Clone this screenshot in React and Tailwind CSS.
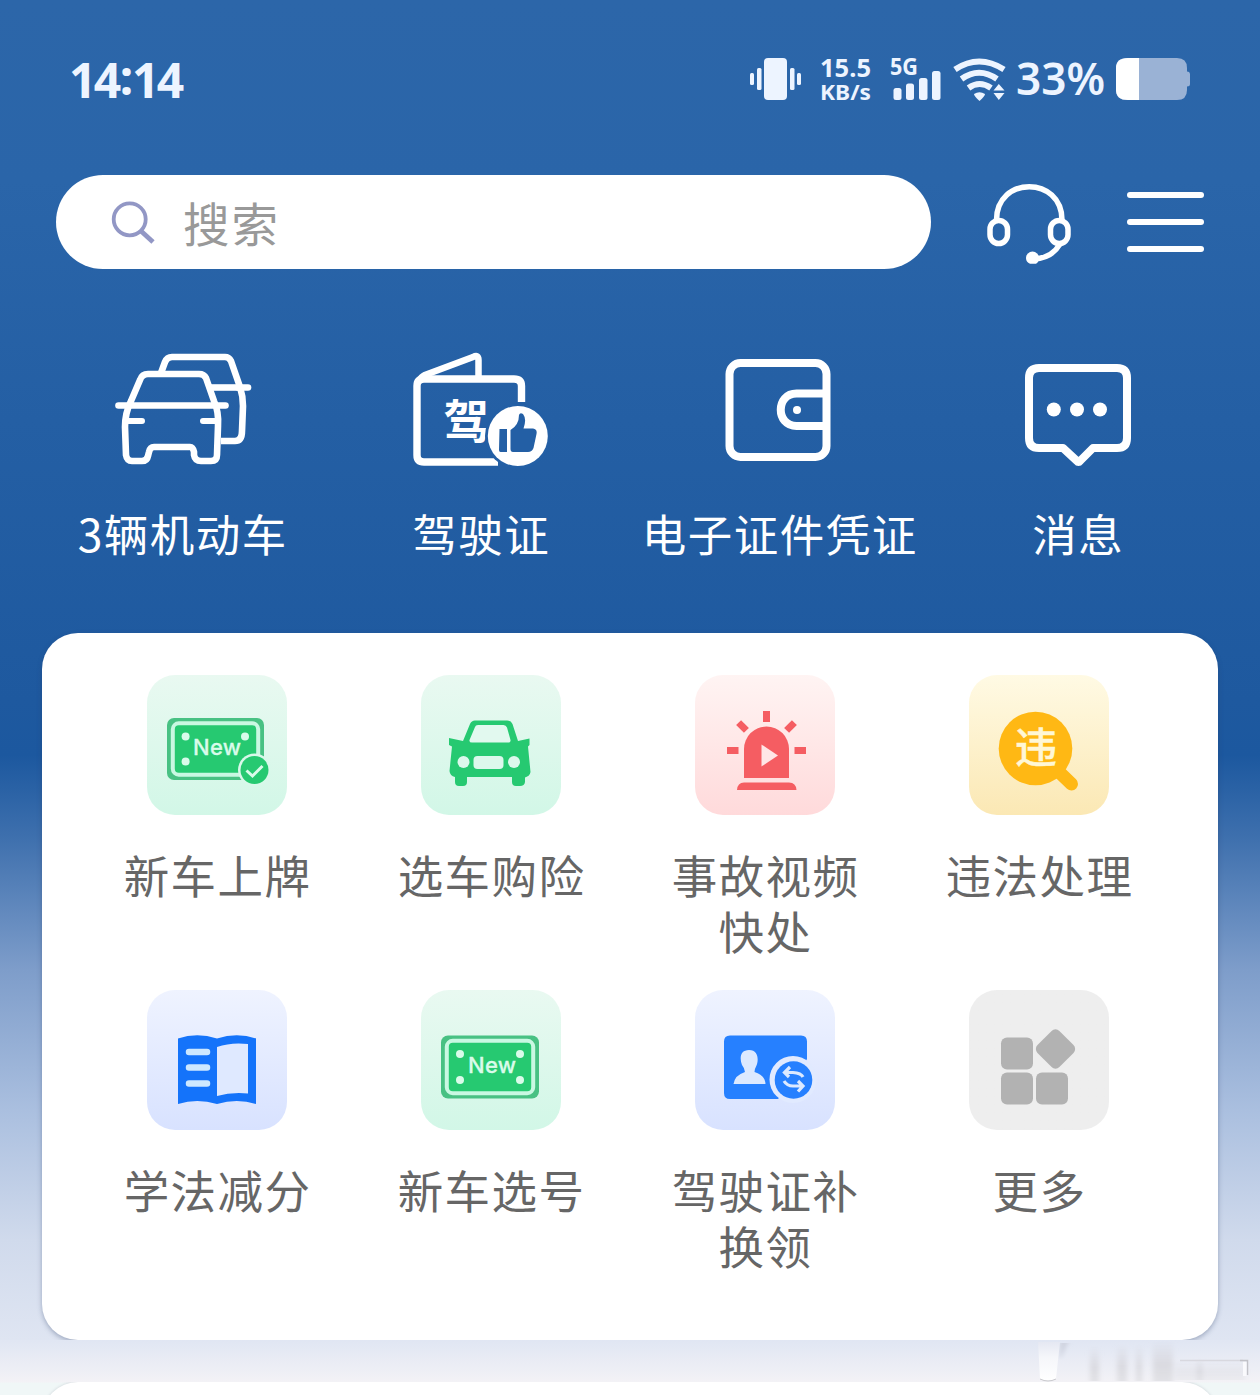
import React from "react";

const CJK = "font-['Noto_Sans_CJK_SC',sans-serif]";

/* Status bar */
function StatusIcons() {
  return (
    <svg className="block h-[70px] w-[450px] overflow-visible" viewBox="745 45 450 70" fill="#edf4ff">
      <rect x="764" y="58" width="23" height="42" rx="4" />
      <rect x="757" y="68" width="4.500" height="22" rx="1.500" />
      <rect x="750" y="73" width="4" height="12" rx="1.500" />
      <rect x="790" y="68" width="4.500" height="22" rx="1.500" />
      <rect x="797" y="73" width="4" height="12" rx="1.500" />
      <g fontFamily="'Noto Sans', sans-serif" fontWeight="700">
        <text x="820" y="77" fontSize="25" textLength="51" lengthAdjust="spacingAndGlyphs">15.5</text>
        <text x="820" y="100" fontSize="22" textLength="51" lengthAdjust="spacingAndGlyphs">KB/s</text>
        <text x="890" y="75" fontSize="23" textLength="28" lengthAdjust="spacingAndGlyphs">5G</text>
      </g>
      <rect x="893.500" y="88" width="8" height="12" rx="2.500" />
      <rect x="906" y="83.500" width="8" height="16.500" rx="2.500" />
      <rect x="919" y="78" width="8.500" height="22" rx="2.500" />
      <rect x="932" y="71" width="8.500" height="29" rx="2.500" />
      <g fill="none" stroke="#edf4ff" strokeWidth="6">
        <path d="M955 69.500 Q979 53.500 1004 69.500" />
        <path d="M961.500 79 Q979 66.500 997 79" />
        <path d="M968.500 88 Q979.500 80 991 88" />
      </g>
      <path d="M974 94 Q979.500 90.500 985 94 Q985 96 979.500 101 Q974 96 974 94Z" />
      <path d="M993.500 90.500 L998.800 84 L1004.500 90.500Z M993.500 93 L1004.500 93 L998.800 100Z" />
      <text x="1016" y="95" fontSize="45" fontWeight="600" fontFamily="'Noto Sans', sans-serif" textLength="89" lengthAdjust="spacingAndGlyphs">33%</text>
      <path d="M1127 58 H1177 Q1187 58 1187 68 V71.500 Q1190 71.500 1190 74.500 V84 Q1190 86.500 1187 86.500 V90 Q1187 100 1177 100 H1127 Q1116 100 1116 90 V68 Q1116 58 1127 58Z" fill="#9ab2d5" />
      <path d="M1139 58 H1128 Q1116 58 1116 68 V90 Q1116 100 1128 100 H1139Z" fill="#fff" />
    </svg>
  );
}

function SearchIcon() {
  return (
    <svg className="h-[50px] w-[50px]" viewBox="108 197 50 50" fill="none" stroke="#9297c5">
      <circle cx="129.700" cy="219.300" r="16" strokeWidth="3.800" />
      <path d="M141.500 231.500 L153 242" strokeWidth="4.800" />
    </svg>
  );
}

function Headset() {
  return (
    <svg className="h-[90px] w-[90px]" viewBox="984 177 90 90" fill="none" stroke="#fff" strokeWidth="5.500">
      <path d="M996.500 220 C996.500 175.500 1062 175.500 1062 220" />
      <rect x="990" y="220.500" width="17.500" height="23" rx="8.700" />
      <rect x="1050.500" y="220.500" width="17.500" height="23" rx="8.700" />
      <path d="M1060 244 Q1052 258 1034 259" />
      <path d="M1026 258 a6.500 6.500 0 0 1 13 0 q0 4 -3 5.800 h-6 q-4 -1.500 -4 -5.800z" fill="#fff" stroke="none" />
    </svg>
  );
}

/* Main shortcuts */
function CarsIcon() {
  return (
    <svg className="h-[130px] w-[150px]" viewBox="107 344 150 130" fill="none" stroke="#fff" strokeWidth="6.600" strokeLinecap="round" strokeLinejoin="round">
      <path strokeLinecap="butt" d="M161 373 L165 362 Q167 357 172 357 H225 Q229 357 231 361 L240 387 Q243 396 243 406 L242 431 Q242 441 235 441 H221" />
      <path strokeLinecap="butt" d="M211 387.500 H240" />
      <path d="M238 387.500 H248" />
      <path d="M140 380 Q142 374 148 374 H199 Q204 374 206 378 L214 401 Q219 412 218 426 L217 455 Q217 461 211 461 H201 Q195 461 194 455 L194 452 Q193 447 190 447 H154 Q150 447 149 452 L148 456 Q147 461 142 461 H132 Q127 461 126 455 L125 427 Q125 413 131 401 Z" />
      <path d="M118.500 405.500 H225.500" />
      <path d="M127 421 H142 M203 421 H215" strokeWidth="6" />
    </svg>
  );
}

function LicenseIcon() {
  return (
    <svg className="h-[130px] w-[150px]" viewBox="406 344 150 130" fill="none" stroke="#fff" strokeWidth="7.400">
      <path d="M498 462 H424 Q417 462 417 455 V386 Q417 379 424 379 H514 Q521.500 379 521.500 386 V402" />
      <path d="M420 380 Q421 377 425 375 L473 357 Q478.500 354 478.500 360 V378" strokeWidth="6.500" />
      <text x="443.500" y="438" fontSize="46" fontWeight="700" fill="#fff" stroke="none" fontFamily="'Noto Sans CJK SC', sans-serif">驾</text>
      <circle cx="518" cy="436" r="33" fill="#235fa5" stroke="none" />
      <circle cx="517.800" cy="436" r="30" fill="#fff" stroke="none" />
      <path d="M499.500 429 H507 V452 H500.500 Q499 452 499 450Z M510.500 430 Q519 425 519 415 Q520 412 523 414 Q527 419 523.500 428.500 H533 Q537.500 429 536.500 434 L533.500 448 Q532 452 528 452 H513 Q510.500 452 510.500 449Z" fill="#235fa5" stroke="none" />
    </svg>
  );
}

function WalletIcon() {
  return (
    <svg className="h-[130px] w-[150px]" viewBox="704.500 344 150 130" fill="none" stroke="#fff" strokeWidth="8">
      <rect x="730" y="363" width="97" height="94" rx="11" />
      <path d="M826 393.500 H797 C776 393.500 776 426 797 426 H826" />
      <circle cx="797.500" cy="410" r="4" fill="#fff" stroke="none" />
    </svg>
  );
}

function MessageIcon() {
  return (
    <svg className="h-[130px] w-[150px]" viewBox="1003 344 150 130" fill="none" stroke="#fff" strokeWidth="8" strokeLinejoin="round">
      <path d="M1039 368 H1117 Q1127 368 1127 378 V438 Q1127 448 1117 448 H1093 L1080 461 Q1078.500 463 1077 461 L1063 448 H1039 Q1029 448 1029 438 V378 Q1029 368 1039 368Z" />
      <g fill="#fff" stroke="none">
        <circle cx="1053.800" cy="409.500" r="7" />
        <circle cx="1077" cy="409.500" r="7" />
        <circle cx="1100" cy="409.500" r="7" />
      </g>
    </svg>
  );
}

/* Service tiles, each drawn on a 140 x 140 box */
function Plate({ x, y, w, h, children }) {
  return (
    <g>
      <rect x={x} y={y} width={w} height={h} rx="7" fill="#48c183" />
      <rect x={x + 5.800} y={y + 5.300} width={w - 11.600} height={h - 10.600} rx="6" fill="#26c971" stroke="#c9f8e2" strokeWidth="4" />
      {children}
    </g>
  );
}

function NewText({ x, y }) {
  return (
    <text x={x} y={y} fontSize="22" fontWeight="500" fill="#d9fbea" stroke="#d9fbea" strokeWidth="0.300" fontFamily="Inter, sans-serif" textLength="48">New</text>
  );
}

function NewPlateCheck() {
  return (
    <svg className="h-full w-full" viewBox="0 0 140 140">
      <Plate x={20} y={43} w={97} h={62} />
      <g fill="#d9fbea">
        <circle cx="38.600" cy="61.500" r="4" />
        <circle cx="98" cy="61.500" r="4" />
        <circle cx="38.600" cy="86.500" r="4" />
      </g>
      <NewText x={46} y={79.500} />
      <circle cx="107.500" cy="95" r="16.500" fill="#d9f8ea" />
      <circle cx="107.500" cy="95" r="14" fill="#26c971" />
      <path d="M99.500 95.500 L105.500 101 L115.500 91" fill="none" stroke="#d9fbea" strokeWidth="3" />
    </svg>
  );
}

function CarFill() {
  return (
    <svg className="h-full w-full" viewBox="0 0 140 140">
      <path d="M49 49 Q50.500 45.500 54 45.500 H86 Q90 45.500 91.500 49 L97 66 L108.500 63.500 V70 L107 71.500 L109.500 97 Q109 101 104 102.500 V107 Q103.500 111 99 111 H95 Q91 111 91 107 V102 H46 V107 Q46 111 42 111 H38 Q34 111 34 107 V102 Q29 101 28.500 96 L31 71.500 L28 70 V63 L42 66Z" fill="#26c971" />
      <path d="M54 52 Q54.500 50 57 50 H82.500 Q85 50 86 52.500 L89.500 65 Q90 67.500 87 67.500 H51 Q48 67.500 48.500 65Z" fill="#e2f9ef" />
      <circle cx="42.500" cy="87" r="6" fill="#dcf8ec" />
      <circle cx="93" cy="87" r="6" fill="#dcf8ec" />
      <rect x="52.500" y="81" width="30" height="13" rx="4" fill="#dcf8ec" />
    </svg>
  );
}

function Siren() {
  return (
    <svg className="h-full w-full" viewBox="0 0 140 140" fill="#f55d62">
      <path d="M49 103 V74 A22.500 22.500 0 0 1 94 74 V103Z" />
      <path d="M66.500 69.500 L83 80.500 L66.500 91.500Z" fill="#ffe6e6" />
      <path d="M42 115 Q42.500 107.500 49 107.500 H94 Q101 107.500 101.500 115Z" />
      <rect x="68" y="36" width="7" height="11" />
      <rect x="32" y="72" width="11.500" height="7" />
      <rect x="99.500" y="72" width="11.500" height="7" />
      <rect x="-5.500" y="-3.500" width="11" height="7" transform="translate(47.500 51.500) rotate(45)" />
      <rect x="-5.500" y="-3.500" width="11" height="7" transform="translate(95.500 51.500) rotate(-45)" />
    </svg>
  );
}

function Violation() {
  return (
    <svg className="h-full w-full" viewBox="0 0 140 140">
      <circle cx="66.500" cy="73.500" r="36.800" fill="#ffb814" />
      <path d="M88 95 L102.500 109" stroke="#ffb814" strokeWidth="13" strokeLinecap="round" />
      <text x="46" y="88" fontSize="42" fontWeight="500" fill="#fff7d5" stroke="#fff7d5" strokeWidth="0.500" fontFamily="'Noto Sans CJK SC', sans-serif">违</text>
    </svg>
  );
}

function Book() {
  return (
    <svg className="h-full w-full" viewBox="0 0 140 140">
      <path d="M31 48.500 Q50 42 70 48.500 Q90 42 109 48.500 V114 Q90 108 70 114 Q50 108 31 114Z" fill="#1473fa" />
      <path d="M70 57 Q84 52 101 54 V103.500 Q84 102 70 106Z" fill="#dfe9ff" />
      <g stroke="#cde8ff" strokeWidth="6.500" strokeLinecap="round">
        <path d="M42 62 H60 M42 77.500 H60 M42 93.500 H60" />
      </g>
    </svg>
  );
}

function NewPlate() {
  return (
    <svg className="h-full w-full" viewBox="0 0 140 140">
      <Plate x={20} y={45.500} w={98} h={63} />
      <g fill="#d9fbea">
        <circle cx="39" cy="64" r="4" />
        <circle cx="99" cy="64" r="4" />
        <circle cx="39" cy="90" r="4" />
        <circle cx="99" cy="90" r="4" />
      </g>
      <NewText x={47} y={82.500} />
    </svg>
  );
}

function CardSwap() {
  return (
    <svg className="h-full w-full" viewBox="0 0 140 140">
      <path d="M35 45.500 H106 Q112 45.500 112 51.500 V69 L100 90 L83 109 H35 Q29 109 29 103 V51.500 Q29 45.500 35 45.500Z" fill="#2680ff" />
      <path d="M54 60 C64 60 63.500 71 61.500 75.500 Q59.500 79 59.500 82 Q70 85 70.500 94 H38.500 Q40 85 50 82 Q49.500 78 47 75 C44 67 46 60 54 60Z" fill="#dce9ff" />
      <circle cx="98" cy="89.500" r="23.500" fill="#e1eaff" />
      <circle cx="98.500" cy="90" r="18.800" fill="#2680ff" />
      <g fill="none" stroke="#dce9ff" strokeWidth="3.200">
        <path d="M95 77 L89.500 82.500 L94 87 M90 82.500 H98 Q106 83 108 87" />
        <path d="M103 91 L108 96 L103 101.500 M108 96 H98 Q92 96 89 91" />
      </g>
    </svg>
  );
}

function More() {
  return (
    <svg className="h-full w-full" viewBox="0 0 140 140" fill="#b2b2b2">
      <rect x="32" y="47.500" width="32" height="32" rx="6" />
      <rect x="32" y="82.500" width="32" height="32" rx="6" />
      <rect x="67" y="82.500" width="32" height="32" rx="6" />
      <rect x="-15.500" y="-15.500" width="31" height="31" rx="5.500" transform="translate(86.500 59) rotate(45)" />
    </svg>
  );
}

const shortcuts = [
  { label: "3辆机动车", Icon: CarsIcon },
  { label: "驾驶证", Icon: LicenseIcon },
  { label: "电子证件凭证", Icon: WalletIcon },
  { label: "消息", Icon: MessageIcon },
];

const green = "from-[#e9f9f1] to-[#d2f7e7]";
const blue = "from-[#eff3ff] to-[#d8e2ff]";

const services = [
  { label: "新车上牌", Icon: NewPlateCheck, tile: green },
  { label: "选车购险", Icon: CarFill, tile: green },
  { label: "事故视频快处", Icon: Siren, tile: "from-[#fff4f3] to-[#ffdadb]" },
  { label: "违法处理", Icon: Violation, tile: "from-[#fffae4] to-[#fbe8b4]" },
  { label: "学法减分", Icon: Book, tile: blue },
  { label: "新车选号", Icon: NewPlate, tile: green },
  { label: "驾驶证补换领", Icon: CardSwap, tile: blue },
  { label: "更多", Icon: More, tile: "from-[#eeeeee] to-[#eeeeee]" },
];

function Smudge() {
  return (
    <svg className="absolute top-0 right-0 h-[42px] w-[230px]" viewBox="1030 1340 230 42">
      <defs>
        <linearGradient id="fade" x1="0" y1="0" x2="0" y2="1">
          <stop offset="0" stopColor="#d0d1da" stopOpacity="0" />
          <stop offset="0.600" stopColor="#d6d6dc" stopOpacity="0.800" />
          <stop offset="1" stopColor="#e2e2e6" />
        </linearGradient>
        <linearGradient id="stem" x1="0" y1="0" x2="0" y2="1">
          <stop offset="0" stopColor="#e5e8f2" />
          <stop offset="0.400" stopColor="#f5f6fa" />
          <stop offset="1" stopColor="#ffffff" />
        </linearGradient>
        <filter id="soft" x="-50%" width="200%"><feGaussianBlur stdDeviation="2.500 0.500" /></filter>
      </defs>
      <g filter="url(#soft)" fill="url(#fade)">
        <path d="M1060 1343 H1068 L1060 1360Z" fill="#cfd3df" />
        <rect x="1090" y="1346" width="9" height="35" />
        <rect x="1117" y="1344" width="10" height="37" />
        <rect x="1136" y="1344" width="6" height="37" />
        <rect x="1153" y="1340" width="20" height="41" />
        <rect x="1175" y="1360" width="70" height="20" opacity="0.400" />
        <rect x="1197" y="1358" width="5" height="22" />
      </g>
      <path d="M1038 1342 H1060 L1056 1379 Q1048 1382 1040 1379Z" fill="url(#stem)" />
      <path d="M1040 1379 Q1048 1383 1056 1379" fill="none" stroke="#c9c9cd" />
      <path d="M1180 1360.500 H1243" fill="none" stroke="#d8d8df" strokeWidth="1.500" />
      <path d="M1240 1360.500 H1247.500 V1375" fill="none" stroke="#c2c2c8" strokeWidth="1.500" />
      <rect x="1243" y="1362" width="3.500" height="14" fill="#fafafd" />
    </svg>
  );
}

export default function App() {
  return (
    <div className={`flex h-[1395px] w-[1260px] flex-col overflow-hidden bg-[linear-gradient(180deg,#2c66a9_0px,#2a65a9_180px,#245fa4_420px,#1e599f_700px,#1c589f_755px,#3d6fad_835px,#7e9dca_970px,#aabfdf_1110px,#d0daec_1240px,#dfe5f2_1340px,#f3f2f6_1382px,#f0f7f7_1383px)] ${CJK}`}>
      <header className="flex h-[160px] shrink-0 items-start justify-between pt-[45px] pr-[65px] pl-[69px] text-[#edf4ff]">
        <time className="font-['Noto_Sans',sans-serif] text-[48px] leading-[69px] font-bold tracking-[-2.800px]">
          14<span className="relative -top-[3px] mx-[1.500px]">:</span>14
        </time>
        <StatusIcons />
      </header>

      <div className="flex h-[124px] shrink-0 items-center pr-14 pl-14">
        <div className="flex h-[94px] w-[875px] items-center rounded-full bg-white pl-[52px]">
          <SearchIcon />
          <span className="-mt-px ml-[25px] text-[46.500px] leading-[60px] tracking-[2px] text-[#999999]">搜索</span>
        </div>
        <div className="ml-[53px]"><Headset /></div>
        <div className="ml-[53px] flex w-[77px] flex-col gap-[21.500px]">
          <span className="h-[5.500px] rounded-full bg-white" />
          <span className="h-[5.500px] rounded-full bg-white" />
          <span className="h-[5.500px] rounded-full bg-white" />
        </div>
      </div>

      <nav className="mx-[33px] grid h-[349px] shrink-0 grid-cols-4 pt-[60px]">
        {shortcuts.map(({ label, Icon }) => (
          <div key={label} className="flex flex-col items-center">
            <Icon />
            <span className="mt-[29px] pl-px text-[44.500px] leading-[60px] tracking-[1.500px] whitespace-nowrap text-white">{label}</span>
          </div>
        ))}
      </nav>

      <main className="mx-[42px] grid h-[707px] shrink-0 grid-cols-[repeat(4,274px)] grid-rows-[315px_315px] rounded-[36px] bg-white px-[38px] pt-[42px] shadow-[0_2px_5px_rgba(40,60,100,0.350)]">
        {services.map(({ label, Icon, tile }) => (
          <div key={label} className="flex flex-col items-center">
            <div className={`h-[140px] w-[140px] rounded-[28px] bg-linear-to-b ${tile}`}>
              <Icon />
            </div>
            <span className="mt-[31px] w-[194px] pl-px text-center text-[45.500px] leading-[56px] tracking-[1.400px] text-[#666666]">{label}</span>
          </div>
        ))}
      </main>

      <div className="relative h-[42px] shrink-0 bg-linear-to-b from-[#e0e6f3] to-[#f3f2f6]">
        <Smudge />
      </div>
      <section className="mx-[42px] h-[60px] shrink-0 rounded-t-[36px] bg-white shadow-[0_0_3px_rgba(90,100,120,0.250)]" />
    </div>
  );
}
